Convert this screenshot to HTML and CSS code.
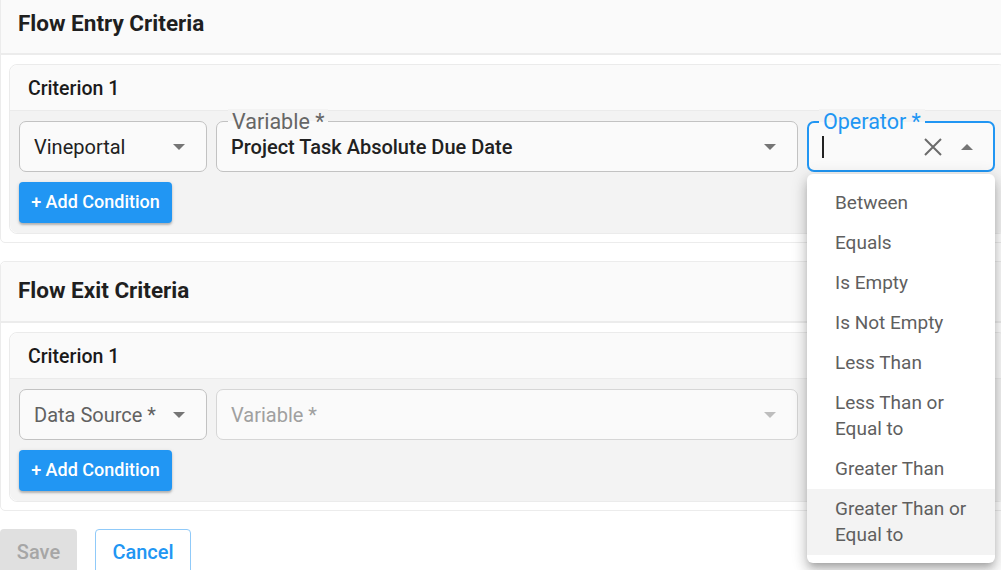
FILE: index.html
```html
<!DOCTYPE html>
<html>
<head>
<meta charset="utf-8">
<link rel="stylesheet" href="styles.css">
</head>
<body>
<div class="page">
  <section class="panel">
    <div class="panel-head">Flow Entry Criteria</div>
    <div class="panel-body">
      <div class="crit">
        <div class="crit-head">Criterion 1</div>
        <div class="crit-body">
          <div class="row">
            <div class="field f-small">
              <span class="value">Vineportal</span>
              <svg class="arrow" width="14" height="8" viewBox="0 0 14 8"><path d="M1 1h12L7 7z" fill="#757575"/></svg>
            </div>
            <div class="field f-wide">
              <span class="label">Variable *</span>
              <span class="value strong">Project Task Absolute Due Date</span>
              <svg class="arrow" width="14" height="8" viewBox="0 0 14 8"><path d="M1 1h12L7 7z" fill="#757575"/></svg>
            </div>
            <div class="field f-small focused">
              <span class="label blue">Operator *</span>
              <span class="caret"></span>
              <svg class="clear" width="20" height="20" viewBox="0 0 20 20"><path d="M2 2L18 18M18 2L2 18" stroke="#6b6b6b" stroke-width="2"/></svg>
              <svg class="arrow up" width="14" height="8" viewBox="0 0 14 8"><path d="M1 7h12L7 1z" fill="#757575"/></svg>
              <ul class="menu">
                <li>Between</li>
                <li>Equals</li>
                <li>Is Empty</li>
                <li>Is Not Empty</li>
                <li>Less Than</li>
                <li>Less Than or<br>Equal to</li>
                <li>Greater Than</li>
                <li class="hover">Greater Than or<br>Equal to</li>
              </ul>
            </div>
          </div>
          <button class="add">+ Add Condition</button>
        </div>
      </div>
    </div>
  </section>

  <section class="panel second">
    <div class="panel-head">Flow Exit Criteria</div>
    <div class="panel-body">
      <div class="crit">
        <div class="crit-head">Criterion 1</div>
        <div class="crit-body">
          <div class="row">
            <div class="field f-small">
              <span class="value muted">Data Source *</span>
              <svg class="arrow" width="14" height="8" viewBox="0 0 14 8"><path d="M1 1h12L7 7z" fill="#757575"/></svg>
            </div>
            <div class="field f-wide disabled">
              <span class="value faint">Variable *</span>
              <svg class="arrow" width="14" height="8" viewBox="0 0 14 8"><path d="M1 1h12L7 7z" fill="#bdbdbd"/></svg>
            </div>
            <div class="field f-small ghost"></div>
          </div>
          <button class="add">+ Add Condition</button>
        </div>
      </div>
    </div>
  </section>

  <div class="actions">
    <button class="save">Save</button>
    <button class="cancel">Cancel</button>
  </div>
</div>
</body>
</html>
```

FILE: styles.css
```css
html, body {
  margin: 0;
  padding: 0;
  overflow: hidden;
  background: #fff;
}
body {
  font-family: Roboto, "Liberation Sans", sans-serif;
  color: #212121;
}
.page {
  width: 1016px;
  margin-top: -8px;
}
.panel {
  border: 1px solid #ececec;
  border-radius: 5px;
  background: #fff;
}
.panel.second {
  margin-top: 18px;
}
.panel-head {
  height: 60px;
  display: flex;
  align-items: center;
  padding-left: 17px;
  background: #fafafa;
  border-bottom: 2px solid #ececec;
  font-size: 22.5px;
  font-weight: 700;
  color: #1f1f1f;
  border-radius: 5px 5px 0 0;
}
.panel.second .panel-head {
  height: 56px;
  padding-bottom: 3px;
}
.panel-body {
  padding: 9px 9px 8px 8px;
}
.crit {
  border: 1px solid #ebebeb;
  border-radius: 8px;
}
.crit-head {
  height: 44px;
  padding-top: 1px;
  display: flex;
  align-items: center;
  padding-left: 18px;
  background: #fafafa;
  border-bottom: 1px solid #ebebeb;
  font-size: 19.5px;
  font-weight: 500;
  color: #1a1a1a;
  border-radius: 8px 8px 0 0;
}
.crit-body {
  background: #f3f3f3;
  padding: 10px 10px 10px 9px;
  border-radius: 0 0 8px 8px;
}
.row {
  display: flex;
  gap: 9px;
}
.field {
  position: relative;
  height: 51px;
  box-sizing: border-box;
  border: 1px solid #c2c2c2;
  border-radius: 7px;
  background: #fafafa;
  display: flex;
  align-items: center;
  padding-left: 14px;
  padding-right: 16px;
}
.f-small {
  width: 188px;
  flex: none;
}
.f-wide {
  flex: 1;
}
.field.focused {
  border: 2px solid #2196f3;
  padding-left: 13px;
  padding-right: 15px;
}
.field.disabled {
  border-color: #d6d6d6;
}
.field.ghost {
  visibility: hidden;
}
.value {
  font-size: 20px;
  color: #212121;
  flex: 1;
  white-space: nowrap;
}
.value.strong {
  font-weight: 500;
}
.value.muted {
  color: #616161;
}
.value.faint {
  color: #a0a0a0;
}
.arrow {
  flex: none;
  margin-right: 4px;
}
.label {
  position: absolute;
  left: 11px;
  top: -13px;
  padding: 0 4px;
  font-size: 21.5px;
  line-height: 26px;
  color: #666;
  background: linear-gradient(to bottom, #f3f3f3 12px, #fafafa 12px);
}
.focused .label {
  left: 10px;
  top: -14px;
  background: linear-gradient(to bottom, #f3f3f3 13px, #fafafa 13px);
}
.label.blue {
  color: #2196f3;
}
.caret {
  width: 2px;
  height: 22px;
  background: #222;
  flex: none;
}
.clear {
  margin-left: auto;
  margin-right: 17px;
  flex: none;
}
.menu {
  position: absolute;
  left: -2px;
  top: 51px;
  width: 188px;
  margin: 0;
  padding: 9px 0 8px;
  list-style: none;
  background: #fff;
  border-radius: 6px;
  box-shadow: 0 5px 6px -3px rgba(0,0,0,0.2), 0 8px 12px 1px rgba(0,0,0,0.14), 0 3px 16px 2px rgba(0,0,0,0.12);
  z-index: 10;
}
.menu li {
  padding: 7px 10px 7px 28px;
  font-size: 19px;
  line-height: 26px;
  color: #5f5f5f;
}
.menu li.hover {
  background: #f3f3f3;
}
.add {
  margin-top: 10px;
  height: 41px;
  width: 153px;
  border: none;
  border-radius: 4px;
  background: #2196f3;
  color: #fff;
  font-family: Roboto, "Liberation Sans", sans-serif;
  font-size: 18px;
  font-weight: 500;
  padding: 0 0 2px;
  box-shadow: 0 2px 2px rgba(0,0,0,0.2), 0 1px 4px rgba(0,0,0,0.12);
}
.actions {
  display: flex;
  gap: 18px;
  margin-top: 18px;
}
.actions button {
  font-family: Roboto, "Liberation Sans", sans-serif;
  font-size: 20px;
  font-weight: 500;
  height: 48px;
  border-radius: 4px;
  padding: 0 0 2px;
}
.save {
  width: 77px;
  background: #e0e0e0;
  border: none;
  color: #a6a6a6;
}
.cancel {
  width: 96px;
  background: #fff;
  border: 1px solid #90caf9;
  color: #2196f3;
}
```
